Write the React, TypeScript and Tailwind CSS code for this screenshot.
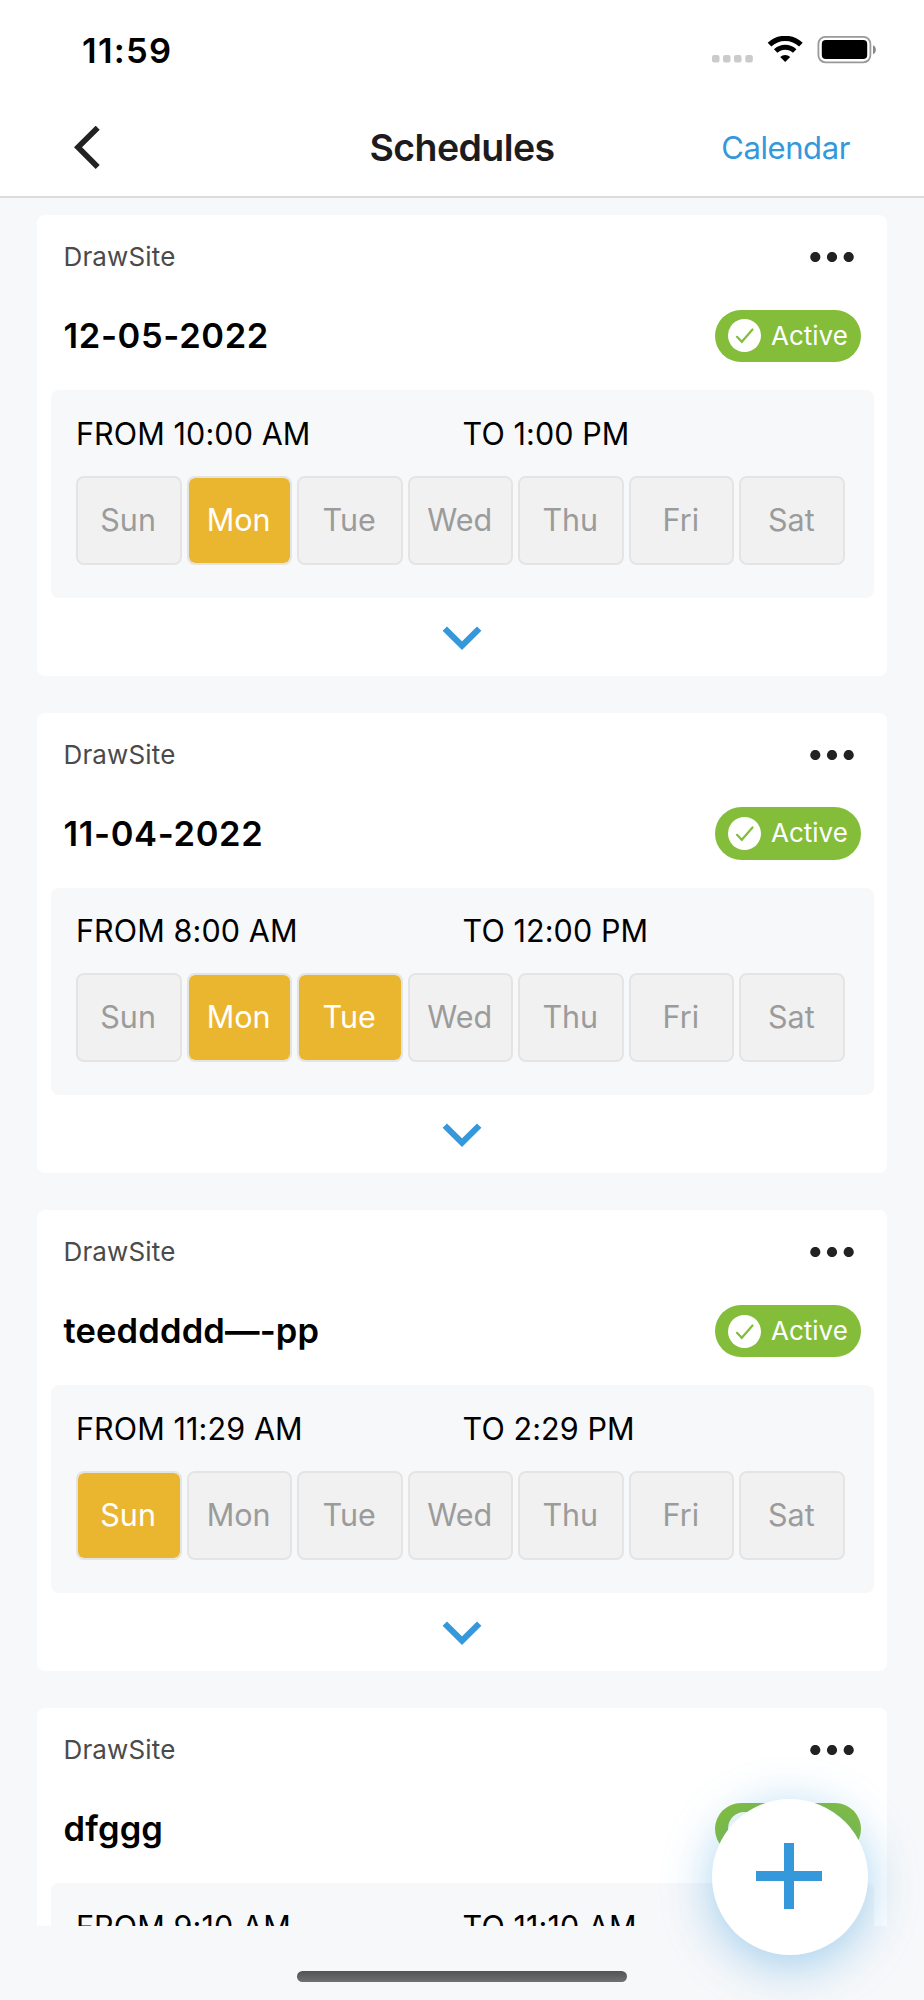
import clsx from "clsx";

interface Schedule {
  name: string;
  from: string;
  to: string;
  days: string[];
}

const weekDays = ["Sun", "Mon", "Tue", "Wed", "Thu", "Fri", "Sat"];

const schedules: Schedule[] = [
  { name: "12-05-2022", from: "10:00 AM", to: "1:00 PM", days: ["Mon"] },
  { name: "11-04-2022", from: "8:00 AM", to: "12:00 PM", days: ["Mon", "Tue"] },
  { name: "teeddddd—-pp", from: "11:29 AM", to: "2:29 PM", days: ["Sun"] },
  { name: "dfggg", from: "9:10 AM", to: "11:10 AM", days: ["Mon"] },
];

function StatusBar() {
  return (
    <div className="flex h-[100px] items-center justify-between pl-[82px] pr-[47px]">
      <span className="pt-[2px] text-[34.5px] leading-none font-semibold tracking-[1.3px] text-black">11:59</span>
      <svg width="165" height="28" viewBox="0 0 165 28">
        <g fill="#cbcbcb">
          <rect x="0" y="19" width="7.5" height="7.5" rx="2" />
          <rect x="11" y="19" width="7.5" height="7.5" rx="2" />
          <rect x="22" y="19" width="7.5" height="7.5" rx="2" />
          <rect x="33.3" y="19" width="7.5" height="7.5" rx="2" />
        </g>
        <g fill="none" stroke="#000">
          <path d="M57.5 8.7a22.6 22.6 0 0 1 31.4 0" strokeWidth="5.2" />
          <path d="M63.7 15a13.7 13.7 0 0 1 19 0" strokeWidth="5" />
        </g>
        <path d="M73.2 26l-5-5.1a7.2 7.2 0 0 1 10 0z" fill="#000" />
        <rect x="106.4" y="0.9" width="52" height="25.4" rx="7" fill="none" stroke="#999" strokeWidth="1.8" />
        <rect x="109.8" y="4.1" width="45.4" height="19" rx="4" fill="#000" />
        <path d="M161 9.2c3.8 1.4 3.8 7.6 0 9z" fill="#888" />
      </svg>
    </div>
  );
}

function Header() {
  return (
    <div className="grid h-[98px] grid-cols-3 items-center border-b-2 border-[#dcdcdc] px-[74px]">
      <svg width="26" height="44" viewBox="0 0 26 44" fill="none" stroke="#222" strokeWidth="5.7">
        <path d="M23.7 1.7L4 21.3L23.7 41" />
      </svg>
      <h1 className="text-center text-[37.5px] leading-none font-semibold tracking-[-0.6px] text-[#1c1c1e]">Schedules</h1>
      <button className="pb-[2px] text-right text-[31px] leading-none tracking-[-0.4px] text-[#3498db]">Calendar</button>
    </div>
  );
}

function ActiveBadge() {
  return (
    <div className="flex h-[52.5px] w-[146px] items-center gap-[10px] rounded-full bg-[#84bd3a] pl-[13px] text-white">
      <svg width="33" height="33" viewBox="0 0 33 33" className="shrink-0">
        <circle cx="16.5" cy="16.5" r="16.5" fill="#fff" />
        <path d="M9 17.8l4.8 5L24.5 10.5" fill="none" stroke="#84bd3a" strokeWidth="2.2" strokeLinecap="round" />
      </svg>
      <span className="text-[26px] leading-none">Active</span>
    </div>
  );
}

function ScheduleCard({ schedule }: { schedule: Schedule }) {
  const isDate = /^\d/.test(schedule.name);

  return (
    <div className="h-[460.7px] shrink-0 rounded-[8px] bg-white pt-[16px] pr-[13px] pl-[14px]">
      <div className="flex h-[52px] items-center justify-between pr-[20px] pl-[12.5px]">
        <span className="text-[26px] leading-none tracking-[0.15px] text-[#4a4a4a]">DrawSite</span>
        <svg width="44" height="10" viewBox="0 0 44 10" fill="#222">
          <circle cx="5.3" cy="5" r="5.1" />
          <circle cx="22" cy="5" r="5.1" />
          <circle cx="38.7" cy="5" r="5.1" />
        </svg>
      </div>
      <div className="mt-[26.5px] flex h-[52.5px] items-center justify-between pr-[13px] pl-[12.5px]">
        <h2
          className={clsx(
            "pt-[1px] text-[34.5px] leading-none font-semibold text-black",
            isDate ? "tracking-[0.65px]" : "tracking-[0.15px]"
          )}
        >
          {schedule.name}
        </h2>
        <ActiveBadge />
      </div>
      <div className="mt-[28px] h-[207.5px] rounded-[8px] bg-[#f7f8fa] pt-[26px] pr-[29px] pl-[25px]">
        <div className="grid h-[36px] grid-cols-2 items-center text-[30.5px] leading-none tracking-[0.1px] text-black">
          <span>FROM {schedule.from}</span>
          <span className="pl-[2px]">TO {schedule.to}</span>
        </div>
        <div className="mt-[23.5px] grid grid-cols-7 gap-[4.8px]">
          {weekDays.map((day) => (
            <div
              key={day}
              className={clsx(
                "flex h-[89px] items-center justify-center rounded-[8px] border-2 border-[#e4e4e4] bg-clip-padding pr-[1.5px] text-[30.5px] leading-none",
                schedule.days.includes(day) ? "bg-[#ebb62f] text-white" : "bg-[#f1f1f1] text-[#9b9b9b]"
              )}
            >
              {day}
            </div>
          ))}
        </div>
      </div>
      <div className="flex justify-center pt-[28px] pr-[1px]">
        <svg width="40" height="26" viewBox="0 0 40 26" fill="none" stroke="#3498db" strokeWidth="6.2">
          <path d="M2.8 2.6L20 19.6L37.2 2.6" />
        </svg>
      </div>
    </div>
  );
}

export default function App() {
  return (
    <div className="relative flex h-[2000px] w-[924px] flex-col overflow-hidden bg-[#f7f8fa] font-['Inter',sans-serif]">
      <div className="bg-white">
        <StatusBar />
        <Header />
      </div>

      <div className="flex h-[1728px] flex-col gap-[37px] overflow-hidden px-[37px] pt-[17px]">
        {schedules.map((s) => (
          <ScheduleCard key={s.name} schedule={s} />
        ))}
      </div>

      <div className="mx-auto mt-[45px] h-[11px] w-[330px] rounded-full bg-linear-to-b from-[#535353] to-[#707070]" />

      <button className="absolute top-[1799px] left-[712px] flex h-[156px] w-[156px] items-center justify-center rounded-full bg-white pr-[2px] pb-[2px] shadow-[0_10px_50px_rgba(52,152,219,0.45)]">
        <svg width="66" height="66" viewBox="0 0 66 66" fill="#3498db">
          <path d="M28 0h10v28h28v10H38v28H28V38H0V28h28z" />
        </svg>
      </button>
    </div>
  );
}
